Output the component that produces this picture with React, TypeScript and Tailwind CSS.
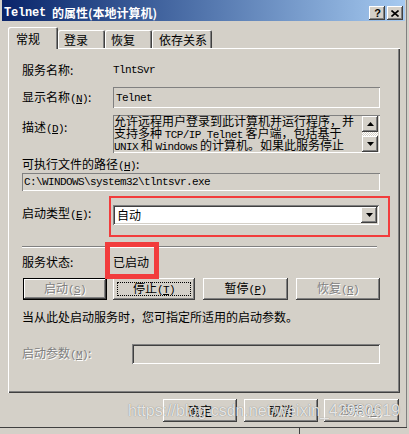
import React from "react";

const raised =
  "shadow-[inset_-1px_-1px_0_#404040,inset_1px_1px_0_#ffffff,inset_-2px_-2px_0_#808080,inset_2px_2px_0_#d4d0c8]";
const thinSunken = "shadow-[inset_1px_1px_0_#808080,inset_-1px_-1px_0_#ffffff]";
const thickSunken =
  "shadow-[inset_1px_1px_0_#808080,inset_-1px_-1px_0_#ffffff,inset_2px_2px_0_#404040,inset_-2px_-2px_0_#d4d0c8]";
const disabled = "text-[#808080] [text-shadow:1px_1px_0_#ffffff]";

const L = ({ children }: { children: React.ReactNode }) => (
  <span className="font-['Liberation_Mono',monospace] text-[11px] tracking-[-0.6px]">{children}</span>
);

const Key = ({ k }: { k: string }) => (
  <L>
    (<u>{k}</u>)
  </L>
);

const Tri = ({ down }: { down?: boolean }) => (
  <svg width="7" height="4" viewBox="0 0 7 4">
    {down ? <polygon points="0,0 7,0 3.5,4" fill="#000" /> : <polygon points="0,4 7,4 3.5,0" fill="#000" />}
  </svg>
);

function Btn({
  children,
  w,
  h,
  dis,
  focus,
  def,
}: {
  children: React.ReactNode;
  w: string;
  h: string;
  dis?: boolean;
  focus?: boolean;
  def?: boolean;
}) {
  return (
    <div
      className={`relative flex items-center justify-center bg-[#d4d0c8] ${w} ${h} ${
        def
          ? "shadow-[inset_0_0_0_1px_#000000,inset_-2px_-2px_0_#404040,inset_2px_2px_0_#ffffff,inset_-3px_-3px_0_#808080]"
          : raised
      } ${dis ? disabled : "text-black"}`}
    >
      {focus && <span className="absolute inset-[4px] border border-dotted border-black" />}
      <span className="leading-[14px]">{children}</span>
    </div>
  );
}

export default function App() {
  return (
    <div className="relative w-[409px] h-[434px] bg-[#d4d0c8] overflow-hidden font-['Noto_Sans_CJK_SC',sans-serif] text-[12px] leading-[14px] text-black">
      {/* window */}
      <div className="w-[407px] h-[428px] pl-[2px] pr-[1px] flex flex-col bg-[#d4d0c8] shadow-[inset_0_-1px_0_#404040,inset_-1px_0_0_#808080]">
        {/* title bar */}
        <div className="w-[403px] h-[21px] flex items-end justify-between pb-[1px] pl-[2px] pr-[2px] bg-gradient-to-r from-[#0a246a] to-[#a6caf0]">
          <div className="h-[14px] flex items-center text-white font-bold whitespace-nowrap">
            <span className="font-['Liberation_Mono',monospace] text-[12px] tracking-[-0.2px]">Telnet</span>
            <span className="ml-[6px]">的属性(本地计算机)</span>
          </div>
          <div className="flex gap-[2px]">
            <div className={`w-[16px] h-[14px] bg-[#d4d0c8] ${raised} flex items-center justify-center`}>
              <span className="font-['Liberation_Sans',sans-serif] font-bold text-[11px] leading-[11px] pl-[1px]">?</span>
            </div>
            <div className={`w-[16px] h-[14px] bg-[#d4d0c8] ${raised} flex items-center justify-center`}>
              <svg width="8" height="7" viewBox="0 0 8 7">
                <path d="M0.5 0.5 L7.5 6.5 M7.5 0.5 L0.5 6.5" stroke="#000" strokeWidth="1.6" />
              </svg>
            </div>
          </div>
        </div>

        {/* body */}
        <div className="pl-[6px] pt-[6px] flex flex-col">
          {/* tabs */}
          <div className="flex items-end h-[21px]">
            <div className="relative z-10 w-[50px] h-[22px] -mb-[1px] bg-[#d4d0c8] rounded-t-[2px] shadow-[inset_1px_1px_0_#ffffff,inset_-1px_0_0_#404040,inset_-2px_0_0_#808080] pl-[8px] pt-[5px]">
              常规
            </div>
            <div className="w-[47px] h-[18px] rounded-t-[2px] shadow-[inset_1px_1px_0_#ffffff,inset_-1px_0_0_#404040,inset_-2px_0_0_#808080] pl-[6px] pt-[3px]">
              登录
            </div>
            <div className="w-[47px] h-[18px] rounded-t-[2px] shadow-[inset_1px_1px_0_#ffffff,inset_-1px_0_0_#404040,inset_-2px_0_0_#808080] pl-[6px] pt-[3px]">
              恢复
            </div>
            <div className="w-[60px] h-[18px] rounded-t-[2px] shadow-[inset_1px_1px_0_#ffffff,inset_-1px_0_0_#404040,inset_-2px_0_0_#808080] pl-[7px] pt-[3px]">
              依存关系
            </div>
          </div>

          {/* panel */}
          <div className="w-[392px] h-[345px] bg-[#d4d0c8] shadow-[inset_1px_1px_0_#ffffff,inset_-1px_-1px_0_#404040,inset_-2px_-2px_0_#808080] pl-[14px] pt-[14px] flex flex-col">
            <div className="h-[16px] flex items-center">
              <span className="w-[91px]">服务名称:</span>
              <L>TlntSvr</L>
            </div>

            <div className="mt-[9px] flex items-center h-[21px]">
              <span className="w-[91px]">
                显示名称<Key k="N" />:
              </span>
              <div className={`w-[267px] h-[21px] ${thinSunken} pl-[3px] pt-[2px]`}>
                <L>Telnet</L>
              </div>
            </div>

            <div className="mt-[7px] flex items-start h-[38px]">
              <span className="w-[91px] mt-[5px]">
                描述<Key k="D" />:
              </span>
              <div className={`w-[267px] h-[38px] ${thinSunken} flex pr-[2px]`}>
                <div className="flex-1 pl-[1px] pt-[0px] leading-[12px] whitespace-nowrap">
                  <div className="h-[12px]">允许远程用户登录到此计算机并运行程序，并</div>
                  <div className="h-[12px]">
                    支持多种 <L>TCP/IP Telnet</L> 客户端，包括基于
                  </div>
                  <div className="h-[12px]">
                    <L>UNIX</L> 和 <L>Windows</L> 的计算机。如果此服务停止
                  </div>
                </div>
                <div className="w-[16px] flex flex-col pt-[1px]">
                  <div className={`w-[16px] h-[16px] ${raised} bg-[#d4d0c8] flex items-center justify-center`}>
                    <Tri />
                  </div>
                  <div className="h-[4px] bg-[image:repeating-conic-gradient(#ffffff_0_25%,#d4d0c8_0_50%)] bg-[length:2px_2px]" />
                  <div className={`w-[16px] h-[16px] ${raised} bg-[#d4d0c8] flex items-center justify-center`}>
                    <Tri down />
                  </div>
                </div>
              </div>
            </div>

            <div className="mt-[4px] h-[14px]">
              可执行文件的路径<Key k="H" />:
            </div>
            <div className={`mt-[2px] w-[358px] h-[18px] ${thinSunken} pl-[2px] flex items-center`}>
              <L>C:\WINDOWS\system32\tlntsvr.exe</L>
            </div>

            <div className="mt-[14px] flex items-start h-[20px]">
              <span className="w-[91px] mt-[1px]">
                启动类型<Key k="E" />:
              </span>
              <div className={`w-[266px] h-[20px] bg-white ${thickSunken} flex items-center justify-between pl-[4px] pr-[2px]`}>
                <span>自动</span>
                <div className={`w-[16px] h-[16px] ${raised} bg-[#d4d0c8] flex items-center justify-center`}>
                  <Tri down />
                </div>
              </div>
            </div>

            <div className="mt-[21px] w-[355px] h-[2px] border-t border-[#808080] border-b border-b-white" />

            <div className="mt-[7px] h-[14px] flex items-center">
              <span className="w-[91px]">服务状态:</span>
              <span>已启动</span>
            </div>

            <div className="mt-[9px] flex h-[22px]">
              <div className="ml-[1px]">
                <Btn w="w-[84px]" h="h-[22px]" dis def>
                  启动<Key k="S" />
                </Btn>
              </div>
              <div className="ml-[6px]">
                <Btn w="w-[82px]" h="h-[22px]" focus>
                  停止<Key k="T" />
                </Btn>
              </div>
              <div className="ml-[8px]">
                <Btn w="w-[85px]" h="h-[22px]">
                  暂停<Key k="P" />
                </Btn>
              </div>
              <div className="ml-[8px]">
                <Btn w="w-[84px]" h="h-[22px]" dis>
                  恢复<Key k="R" />
                </Btn>
              </div>
            </div>

            <div className="mt-[10px] h-[14px] whitespace-nowrap">当从此处启动服务时，您可指定所适用的启动参数。</div>

            <div className="mt-[20px] flex items-center h-[20px]">
              <span className={`w-[110px] ${disabled}`}>
                启动参数<Key k="M" />:
              </span>
              <div className={`w-[248px] h-[20px] ${thickSunken}`} />
            </div>
          </div>

          {/* dialog buttons */}
          <div className="mt-[6px] flex h-[23px] ml-[155px]">
            <Btn w="w-[74px]" h="h-[23px]">确定</Btn>
            <div className="ml-[7px]">
              <Btn w="w-[74px]" h="h-[23px]">取消</Btn>
            </div>
            <div className="ml-[6px]">
              <Btn w="w-[75px]" h="h-[23px]" dis>
                应用<Key k="A" />
              </Btn>
            </div>
          </div>
        </div>
      </div>
      {/* area below window */}
      <div className="flex h-[6px]">
        <div className="w-[299px]" />
        <div className="w-[1px] h-[6px] bg-[#404040]" />
      </div>

      {/* annotations */}
      <div className="absolute left-[109px] top-[196px] w-[281px] h-[41px] border-2 border-[#f23c3c]" />
      <div className="absolute left-[105px] top-[242px] w-[54px] h-[37px] border-[5px] border-[#f23c3c]" />

      {/* watermark */}
      <div className="absolute left-[128px] top-[401px] font-['Liberation_Sans',sans-serif] text-[16px] leading-[20px] text-[rgba(255,255,255,0.82)] [text-shadow:0_0_1px_rgba(80,80,80,0.8)] whitespace-nowrap">
        https://blog.csdn.net/weixin_42980619
      </div>
    </div>
  );
}
